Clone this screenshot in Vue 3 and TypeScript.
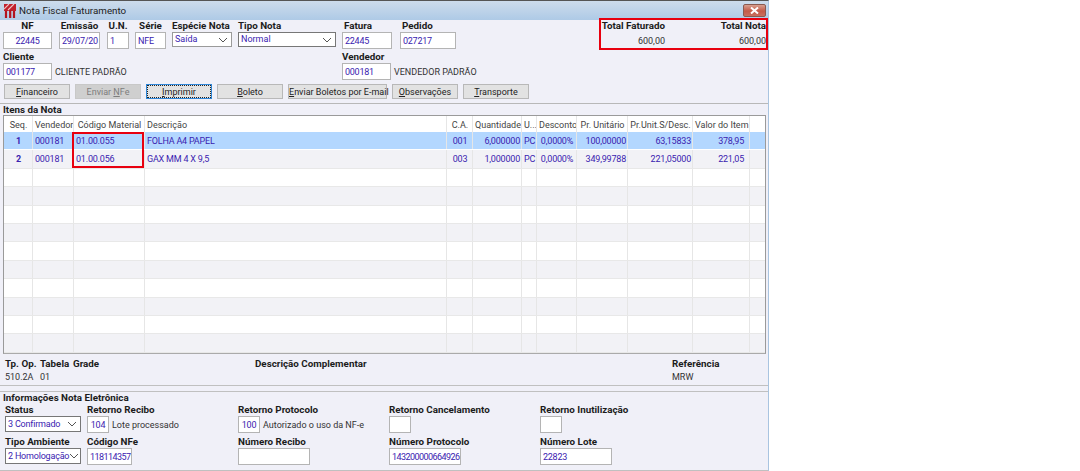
<script setup lang="ts">
const buttons = [
  { pre: '', key: 'F', post: 'inanceiro', cls: '' },
  { pre: 'Enviar ', key: 'N', post: 'Fe', cls: 'disabled' },
  { pre: '', key: 'I', post: 'mprimir', cls: 'focused' },
  { pre: '', key: 'B', post: 'oleto', cls: '' },
  { pre: '', key: 'E', post: 'nviar Boletos por E-mail', cls: 'wide' },
  { pre: '', key: 'O', post: 'bservações', cls: '' },
  { pre: '', key: 'T', post: 'ransporte', cls: '' },
]
const headers = ['Seq.', 'Vendedor', 'Código Material', 'Descrição', 'C.A.', 'Quantidade', 'U...', 'Desconto', 'Pr. Unitário', 'Pr.Unit.S/Desc.', 'Valor do Item', '']
const rows: string[][] = [
  ['1', '000181', '01.00.055', 'FOLHA A4 PAPEL', '001', '6,000000', 'PC', '0,0000%', '100,00000', '63,15833', '378,95', ''],
  ['2', '000181', '01.00.056', 'GAX MM 4 X 9,5', '003', '1,000000', 'PC', '0,0000%', '349,99788', '221,05000', '221,05', ''],
]
for (let i = 0; i < 10; i++) rows.push(Array(12).fill(''))
</script>

<template>
  <div class="page">
    <div class="window">
      <header class="titlebar">
        <svg class="logo" width="12" height="14" viewBox="0 0 12 14">
          <rect width="12" height="7" fill="#c0202c" />
          <path d="M0 5 L5 0 M4 6 L10 0" stroke="#eec4c4" stroke-width="1.1" />
          <path d="M2 7v7M6.2 6v8M10 7v7" stroke="#b3141f" stroke-width="2.2" />
        </svg>
        <span class="title">Nota Fiscal Faturamento</span>
        <div class="close">
          <svg width="9" height="7" viewBox="0 0 9 7"><path d="M1 0.5 L8 6.5 M8 0.5 L1 6.5" stroke="#fff" stroke-width="2" /></svg>
        </div>
      </header>

      <section class="head">
        <div class="row-top">
          <div class="field f-nf"><label class="center">NF</label><div class="input center">22445</div></div>
          <div class="field f-em"><label class="center">Emissão</label><div class="input">29/07/20</div></div>
          <div class="field f-un"><label class="center">U.N.</label><div class="input">1</div></div>
          <div class="field f-se"><label class="center">Série</label><div class="input">NFE</div></div>
          <div class="field f-es"><label>Espécie Nota</label>
            <div class="select"><span>Saída</span><svg width="10" height="6" viewBox="0 0 10 6"><path d="M1 1l4 4 4-4" fill="none" stroke="#555" /></svg></div>
          </div>
          <div class="field f-ti"><label>Tipo Nota</label>
            <div class="select dark"><span>Normal</span><svg width="10" height="6" viewBox="0 0 10 6"><path d="M1 1l4 4 4-4" fill="none" stroke="#555" /></svg></div>
          </div>
          <div class="field f-fa"><label class="indent">Fatura</label><div class="input">22445</div></div>
          <div class="field f-pe"><label class="indent">Pedido</label><div class="input">027217</div></div>
          <div class="totals">
            <div class="tot tot-a"><label>Total Faturado</label><span>600,00</span></div>
            <div class="tot tot-b"><label>Total Nota</label><span>600,00</span></div>
          </div>
        </div>
        <div class="row-second">
          <div class="field f-cl"><label>Cliente</label>
            <div class="inline"><div class="input w-cl">001177</div><span class="plain">CLIENTE PADRÃO</span></div>
          </div>
          <div class="field f-ve"><label>Vendedor</label>
            <div class="inline"><div class="input w-ve">000181</div><span class="plain">VENDEDOR PADRÃO</span></div>
          </div>
        </div>
        <div class="buttons">
          <button v-for="b in buttons" :key="b.post" :class="b.cls">{{ b.pre }}<u>{{ b.key }}</u>{{ b.post }}</button>
        </div>
      </section>

      <section class="items">
        <h2>Itens da Nota</h2>
        <div class="grid">
          <div class="g-row g-head">
            <div v-for="(h, i) in headers" :key="i" class="cell" :class="'c' + i">{{ h }}</div>
          </div>
          <div v-for="(r, ri) in rows" :key="ri" class="g-row" :class="{ selected: ri === 0, stripe: ri % 2 === 1 }">
            <div v-for="(v, i) in r" :key="i" class="cell" :class="'c' + i">{{ v }}</div>
          </div>
        </div>
        <div class="marker marker-code"></div>
      </section>

      <section class="extra">
        <div class="ex e-tp"><label>Tp. Op.</label><span>510.2A</span></div>
        <div class="ex e-ta"><label>Tabela</label><span>01</span></div>
        <div class="ex e-gr"><label>Grade</label></div>
        <div class="ex e-de"><label>Descrição Complementar</label></div>
        <div class="ex e-re"><label>Referência</label><span>MRW</span></div>
      </section>

      <section class="nfe">
        <h2>Informações Nota Eletrônica</h2>
        <div class="nfe-grid">
          <div class="nf-col col-a">
            <div class="field"><label>Status</label>
              <div class="select dark sel-nfe"><span>3 Confirmado</span><svg width="10" height="6" viewBox="0 0 10 6"><path d="M1 1l4 4 4-4" fill="none" stroke="#555" /></svg></div>
            </div>
            <div class="field"><label>Tipo Ambiente</label>
              <div class="select dark sel-nfe"><span>2 Homologação</span><svg width="10" height="6" viewBox="0 0 10 6"><path d="M1 1l4 4 4-4" fill="none" stroke="#555" /></svg></div>
            </div>
          </div>
          <div class="nf-col col-b">
            <div class="field"><label>Retorno Recibo</label>
              <div class="inline"><div class="input w-ret center">104</div><span class="plain">Lote processado</span></div>
            </div>
            <div class="field"><label>Código NFe</label><div class="input w-cod">118114357</div></div>
          </div>
          <div class="nf-col col-c">
            <div class="field"><label>Retorno Protocolo</label>
              <div class="inline"><div class="input w-ret center">100</div><span class="plain">Autorizado o uso da NF-e</span></div>
            </div>
            <div class="field"><label>Número Recibo</label><div class="input w-rec"></div></div>
          </div>
          <div class="nf-col col-d">
            <div class="field"><label>Retorno Cancelamento</label><div class="input w-ret"></div></div>
            <div class="field"><label>Número Protocolo</label><div class="input w-pro">143200000664926</div></div>
          </div>
          <div class="nf-col col-e">
            <div class="field"><label>Retorno Inutilização</label><div class="input w-ret"></div></div>
            <div class="field"><label>Número Lote</label><div class="input w-lot">22823</div></div>
          </div>
        </div>
      </section>
    </div>
  </div>
</template>

<style>
html, body { margin: 0; background: #fff; overflow: hidden; }
</style>

<style scoped>
.page { width: 1080px; height: 471px; background: #fff; font-family: Roboto, "Liberation Sans", sans-serif; font-size: 9px; color: #2a2a3a; }
.window { position: relative; width: 769px; height: 471px; box-sizing: border-box; background: #f0f0f8; border-top: 1px solid #555; border-right: 1px solid #a9c4e0; display: flex; flex-direction: column; }
.titlebar { height: 19px; flex: none; display: flex; align-items: center; background: linear-gradient(#cddcec, #aecae6); padding-left: 4px; position: relative; }
.logo { margin-right: 3px; margin-top: 1px; }
.title { font-size: 9.8px; color: #222; }
.close { position: absolute; right: 2px; top: 3px; width: 23px; height: 13px; box-sizing: border-box; border: 1px solid #8a5a50; border-radius: 2px; background: linear-gradient(#d8a090, #c45a48 55%, #c87060); display: flex; align-items: center; justify-content: center; }
label { display: block; font-weight: 700; font-size: 9.8px; line-height: 12px; color: #1c1c1c; white-space: nowrap; }
.center { text-align: center; }
.indent { padding-left: 2px; }
.input { box-sizing: border-box; height: 17px; line-height: 16px; background: #fff; border: 1px solid #b4b4b4; color: #3a22b0; padding: 0 2px; white-space: nowrap; overflow: hidden; letter-spacing: -0.25px; }
.select { box-sizing: border-box; height: 15px; background: #fff; border: 1px solid #9a9a9a; color: #3a22b0; padding: 0 3px 0 2px; display: flex; align-items: center; justify-content: space-between; line-height: 13px; white-space: nowrap; }
.select.dark { border-color: #777; }
.head { padding: 0 0 0 3px; flex: none; }
.row-top { display: flex; height: 31px; position: relative; }
.field { flex: none; }
.f-nf { width: 49px; margin-right: 7px; }
.f-em { width: 41px; margin-right: 7px; }
.f-un { width: 22px; margin-right: 6px; }
.f-se { width: 31px; margin-right: 6px; }
.f-es { width: 60px; margin-right: 6px; }
.f-ti { width: 98px; margin-right: 6px; }
.f-fa { width: 50px; margin-right: 8px; }
.f-pe { width: 56px; }
.totals { margin-left: 147px; width: 163px; height: 28px; display: flex; }
.tot { display: flex; flex-direction: column; align-items: flex-end; }
.tot span { line-height: 12px; margin-top: 3px; color: #333; }
.tot-a { width: 62px; }
.tot-b { flex: 1; }
.row-second { display: flex; height: 30px; }
.f-cl { width: 339px; }
.inline { display: flex; align-items: center; gap: 3px; }
.w-cl { width: 49px; }
.w-ve { width: 49px; }
.plain { color: #333; white-space: nowrap; }
.buttons { display: flex; gap: 5px; padding: 3px 0 0 1px; }
button { box-sizing: border-box; width: 66px; height: 15px; padding: 1px 0 0; font: inherit; color: #222; background: #e2e2e2; border: 1px solid #b8b8b8; line-height: 12px; white-space: nowrap; }
button.wide { width: 99px; }
button.disabled { background: #cfcfcf; color: #7d7d7d; border-color: #c8c8c8; }
button.focused { border: 1px solid #2e86d8; outline: 1px dotted #222; outline-offset: -2px; }
.items { position: relative; flex: none; margin-top: 4px; border-top: 1px solid #b8b8b8; height: 251px; box-sizing: border-box; padding: 0 2px 0 3px; }
h2 { margin: 0; font-size: 9.8px; line-height: 11px; font-weight: 700; color: #1c1c1c; }
.grid { border: 1px solid #9a9a9a; border-bottom: 1px solid #aaa; background: #fff; height: 239px; box-sizing: border-box; overflow: hidden; }
.g-row { display: grid; grid-template-columns: 29px 41px 71px 302px 26px 49px 15px 40px 51px 65px 57px 1fr; height: 18.4px; box-sizing: border-box; border-bottom: 1px solid #e8e8e8; background: #fff; color: #3a22b0; }
.g-head { height: 16px; background: #fff; color: #444; border-bottom: none; }
.g-row.selected { background: #b3d7ff; border-bottom-color: #fff; }
.g-row.stripe { background: #f2f2f6; }
.cell { border-right: 1px solid #e6e6e6; padding: 0 1px 0 2px; line-height: 18px; white-space: nowrap; overflow: hidden; letter-spacing: -0.2px; }
.g-head .cell { text-align: center; line-height: 18px; letter-spacing: 0; }
.c0 { text-align: center; font-weight: 700; }
.g-head .c0 { font-weight: 400; }
.g-row .c4 { text-align: center; }
.c5, .c8, .c9 { text-align: right; padding-right: 1px; }
.c10 { text-align: right; padding-right: 5px; }
.c7 { text-align: center; }
.g-head .c3 { text-align: left; }
.c11 { border-right: none; }
.marker { position: absolute; box-sizing: border-box; border: 2px solid #e8000f; pointer-events: none; }
.marker-code { left: 72px; top: 28px; width: 72px; height: 36px; }
.totals::after { content: ""; position: absolute; left: 596px; top: -2px; width: 169px; height: 32px; box-sizing: border-box; border: 2px solid #e8000f; }
.extra { flex: none; height: 32px; position: relative; display: flex; padding: 4px 0 0 5px; border-bottom: 1px solid #c0c0c0; box-sizing: border-box; }
.ex { display: flex; flex-direction: column; gap: 1px; }
.ex span { line-height: 12px; color: #333; }
.e-tp { width: 35px; }
.e-ta { width: 33px; }
.e-gr { width: 182px; }
.e-de { width: 417px; }
.nfe { flex: none; margin-top: 5px; border-top: 1px solid #c0c0c0; border-bottom: 1px solid #c0c0c0; height: 80px; box-sizing: border-box; padding-left: 3px; }
.nfe-grid { display: flex; margin-top: 1px; padding-left: 2px; }
.nf-col { display: flex; flex-direction: column; gap: 0; }
.nf-col .field:first-child { height: 32px; }
.col-a { width: 82px; }
.col-b { width: 151px; }
.col-c { width: 151px; }
.col-d { width: 151px; }
.sel-nfe { width: 76px; height: 16px; letter-spacing: -0.2px; }
.sel-nfe svg { flex: none; }
.w-ret { width: 22px; }
.w-cod { width: 45px; letter-spacing: -0.55px; }
.w-rec { width: 72px; }
.w-pro { width: 72px; letter-spacing: -0.55px; }
.w-lot { width: 72px; }
</style>
